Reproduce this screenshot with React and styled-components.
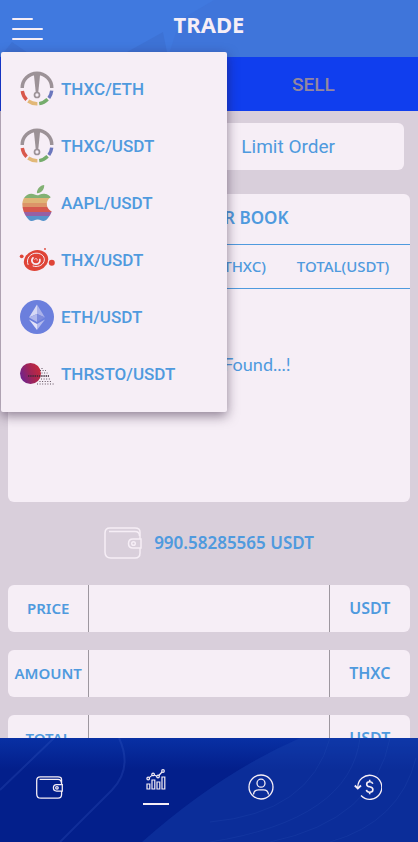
import React, { useState } from "react";
import styled, { createGlobalStyle } from "styled-components";

const pairs = [
	{ name: "THXC/ETH", icon: "gauge" },
	{ name: "THXC/USDT", icon: "gauge" },
	{ name: "AAPL/USDT", icon: "apple" },
	{ name: "THX/USDT", icon: "swirl" },
	{ name: "ETH/USDT", icon: "eth" },
	{ name: "THRSTO/USDT", icon: "thrsto" },
];

const fields = [
	{ id: "price", label: "PRICE", unit: "USDT" },
	{ id: "amount", label: "AMOUNT", unit: "THXC" },
	{ id: "total", label: "TOTAL", unit: "USDT" },
];

const GaugeIcon = () => (
	<svg width='36' height='36' viewBox='0 0 36 36' fill='none' strokeWidth='3.4'>
		<path d='M3.2 17A14.8 14.8 0 0 1 32.8 17' stroke='#9c9297' />
		<path d='M3.3 20A14.8 14.8 0 0 0 7.600 28.700' stroke='#d9584c' />
		<path d='M9.200 30A14.8 14.8 0 0 0 18.400 32.8' stroke='#e2b878' />
		<path d='M20.200 32.6A14.8 14.8 0 0 0 28.600 28.300' stroke='#75ac6c' />
		<path d='M29.800 27A14.8 14.8 0 0 0 32.7 19.600' stroke='#6b77bd' />
		<path d='M14.8 2.500H21.2L19.200 22H16.800Z' fill='#9c9297' />
		<circle cx='18' cy='24' r='2.500' stroke='#9c9297' strokeWidth='1.700' fill='#f6eef6' />
	</svg>
);

const AppleIcon = () => (
	<svg width='36' height='36' viewBox='0 0 24 24'>
		<defs>
			<linearGradient id='bands' gradientUnits='userSpaceOnUse' x1='0' y1='0' x2='0' y2='24'>
				<stop offset='.37' stopColor='#82b173' />
				<stop offset='.37' stopColor='#dfb476' />
				<stop offset='.5' stopColor='#dfb476' />
				<stop offset='.5' stopColor='#dc9468' />
				<stop offset='.62' stopColor='#dc9468' />
				<stop offset='.62' stopColor='#d5584e' />
				<stop offset='.75' stopColor='#d5584e' />
				<stop offset='.75' stopColor='#9660a4' />
				<stop offset='.87' stopColor='#9660a4' />
				<stop offset='.87' stopColor='#5794cb' />
			</linearGradient>
		</defs>
		<path
			fill='url(#bands)'
			d='M12.152 6.896c-.948 0-2.415-1.078-3.96-1.04-2.04.027-3.91 1.183-4.961 3.014-2.117 3.675-.546 9.103 1.519 12.09 1.013 1.454 2.208 3.09 3.792 3.039 1.52-.065 2.09-.987 3.935-.987 1.831 0 2.35.987 3.96.948 1.637-.026 2.676-1.48 3.676-2.948 1.156-1.688 1.636-3.325 1.662-3.415-.039-.013-3.182-1.221-3.22-4.857-.026-3.04 2.48-4.494 2.597-4.559-1.429-2.09-3.623-2.324-4.39-2.376-2-.156-3.675 1.09-4.61 1.09zM15.53 3.83c.843-1.012 1.4-2.427 1.245-3.83-1.207.052-2.662.805-3.532 1.818-.78.896-1.454 2.338-1.273 3.714 1.338.104 2.715-.688 3.559-1.701'
		/>
	</svg>
);

const SwirlIcon = () => (
	<svg width='36' height='36' viewBox='0 0 36 36' fill='#df4437'>
		<ellipse cx='17' cy='18.5' rx='12.4' ry='10.200' transform='rotate(-20 17 18.5)' />
		<g fill='none' stroke='#f6eef6' strokeLinecap='round'>
			<path d='M9 22.500C6.500 16 12 10.800 18 11.200C23 11.500 26.500 15 25 19.500C23.500 23.800 18 25.500 14 24' strokeWidth='1' />
			<path d='M14 15.800C11.500 18.500 13.500 22.300 17.200 22.200C20 22 21.500 19.500 20.800 17.500' strokeWidth='1.700' />
			<path d='M15.800 17.200C17 15.800 18.500 16.500 18.200 18.200' strokeWidth='.9' />
		</g>
		<circle cx='2.700' cy='14.300' r='1.900' />
		<circle cx='32.800' cy='20.800' r='3' />
		<circle cx='26' cy='7' r='.9' />
	</svg>
);

const EthIcon = () => (
	<svg width='36' height='36' viewBox='0 0 36 36'>
		<circle cx='18' cy='18' r='17' fill='#6b7fdd' />
		<path d='M18 5.500L10 18.500L18 15Z' fill='#d7d9f4' />
		<path d='M18 5.500L26 18.500L18 15Z' fill='#aab2ea' />
		<path d='M10 18.500L18 15V23Z' fill='#b0b7ec' />
		<path d='M26 18.500L18 15V23Z' fill='#7e8cdd' />
		<path d='M10 20.500L18 25V31Z' fill='#e4e4f8' />
		<path d='M26 20.500L18 25V31Z' fill='#b4bbee' />
	</svg>
);

const ThrstoIcon = () => (
	<svg width='36' height='36' viewBox='0 0 36 36'>
		<defs>
			<linearGradient id='ball' x1='0' y1='.7' x2='1' y2='.3'>
				<stop offset='0' stopColor='#6a2392' />
				<stop offset='.5' stopColor='#a02458' />
				<stop offset='1' stopColor='#c62a3a' />
			</linearGradient>
		</defs>
		<circle cx='11.500' cy='17.500' r='10.500' fill='url(#ball)' />
		<g stroke='#3a2837' strokeWidth='1' strokeDasharray='1 1.600'>
			<path d='M22.500 12.500H25M21 14.500H27M22.500 17H28.500M22 23H31M20.500 25.500H32.500M18 28H36' strokeOpacity='.8' />
			<path d='M9 20H30' strokeWidth='1.300' strokeDasharray='1.400 .8' />
		</g>
	</svg>
);

const icons = {
	gauge: GaugeIcon,
	apple: AppleIcon,
	swirl: SwirlIcon,
	eth: EthIcon,
	thrsto: ThrstoIcon,
};

const WalletIcon = ({ width, height, stroke = 1.5 }) => (
	<svg width={width} height={height} viewBox='0 0 38 32' fill='none' stroke='currentColor' strokeWidth={stroke}>
		<path d='M36 12V5Q36 1 31 1H6Q1 1 1 6V25Q1 31 7 31H31Q36 31 36 26V21' />
		<path d='M5 4.500H31Q35.500 4.500 35.500 9' />
		<path d='M37 12H29Q24.500 12 24.500 16.500Q24.500 21 29 21H37Z' />
		<circle cx='29.500' cy='16.500' r='1.800' />
	</svg>
);

const ChartIcon = () => (
	<svg width='20' height='21' viewBox='0 0 20 21' fill='none' stroke='currentColor' strokeWidth='1.200'>
		<path d='M1 15H3.800V20H1ZM6 11H8.800V20H6ZM11 13H13.800V20H11ZM16 8H18.800V20H16Z' />
		<path d='M3.200 8.600L6 6.400M8.300 6L10.800 7.200M12.800 6.500L16 3' />
		<circle cx='2.200' cy='9.500' r='1.300' />
		<circle cx='7.100' cy='5.400' r='1.300' />
		<circle cx='12' cy='7.500' r='1.300' />
		<circle cx='17' cy='2' r='1.300' />
	</svg>
);

const UserIcon = () => (
	<svg width='26' height='26' viewBox='0 0 26 26' fill='none' stroke='currentColor' strokeWidth='1.300'>
		<circle cx='13' cy='13' r='12' />
		<circle cx='13' cy='9.200' r='4' />
		<path d='M5.500 20.500Q6 15.800 10.500 15.800H15.500Q20 15.800 20.500 20.500' />
	</svg>
);

const HistoryIcon = () => (
	<svg width='28' height='26' viewBox='0 0 28 26' fill='none' stroke='currentColor' strokeWidth='1.300'>
		<path d='M3.800 14A12 12 0 1 1 7 21.500' />
		<path d='M.8 11.500L3.800 14.500L7 11.500' strokeWidth='1.800' />
		<path d='M18.800 9.800Q18.200 7.800 15.700 7.800Q12.700 7.800 12.700 10.200Q12.700 12.300 15.700 12.800Q18.900 13.400 18.900 15.700Q18.900 18.200 15.700 18.200Q12.800 18.200 12.400 15.900M15.700 5.700V7.800M15.700 18.200V20.300' strokeWidth='1.600' />
	</svg>
);

const App = () => {
	const [pair, setPair] = useState("THXC/ETH");
	const [open, setOpen] = useState(true);
	const [values, setValues] = useState({ price: "", amount: "", total: "" });

	return (
		<Container>
			<GlobalStyle />
			<Header>
				<HeaderArt viewBox='0 0 418 57' preserveAspectRatio='none'>
					<path d='M0 57L12 42L34 57ZM118 57L163 32L168 57Z' fill='#3d72d5' />
					<path d='M168 57L180 20L214 0H418V57Z' fill='#3f75da' />
				</HeaderArt>
				<MenuButton aria-label='Menu'>
					<Bar short />
					<Bar />
					<Bar />
				</MenuButton>
				<Heading>TRADE</Heading>
			</Header>
			<Tabs>
				<Tab active>BUY</Tab>
				<Tab>SELL</Tab>
			</Tabs>

			<Content>
				<Filters>
					<PairButton onClick={() => setOpen(!open)}>{pair}</PairButton>
					<OrderType aria-label='Order type'>
						<option>Limit Order</option>
						<option>Market Order</option>
					</OrderType>
				</Filters>

				<Book>
					<BookTitle>THXC ORDER BOOK</BookTitle>
					<BookTable>
						<thead>
							<tr>
								<th>PRICE(USDT)</th>
								<th>AMOUNT(THXC)</th>
								<th>TOTAL(USDT)</th>
							</tr>
						</thead>
						<tbody>
							<tr>
								<td colSpan='3'>No Records Found...!</td>
							</tr>
						</tbody>
					</BookTable>
				</Book>

				<Balance>
					<WalletIcon width='38' height='32' />
					<span>990.58285565 USDT</span>
				</Balance>

				{fields.map((props) => (
					<Field key={props.id}>
						<Label htmlFor={props.id}>{props.label}</Label>
						<Input
							id={props.id}
							value={values[props.id]}
							onChange={(e) => setValues({ ...values, [props.id]: e.target.value })}
						/>
						<Unit>{props.unit}</Unit>
					</Field>
				))}
			</Content>

			<Nav>
				<NavArt viewBox='0 0 418 104' preserveAspectRatio='none'>
					<path d='M142 104Q220 35 300 0H418V104Z' fill='#1843b0' fillOpacity='.4' />
					<g fill='none' stroke='#4c70d0' strokeOpacity='.2'>
						<path d='M0 52L54 0M60 104L112 52Q133 30 119 0' strokeWidth='2' />
						<path d='M210 84Q310 75 330 0M210 104Q350 82 360 0M270 104Q375 82 390 0M330 104Q400 84 416 20' strokeOpacity='.12' />
					</g>
				</NavArt>
				<NavLink href='#wallet' aria-label='Wallet'>
					<WalletIcon width='27' height='23' stroke={1.8} />
				</NavLink>
				<NavLink href='#trade' aria-label='Trade' active>
					<ChartIcon />
				</NavLink>
				<NavLink href='#profile' aria-label='Profile'>
					<UserIcon />
				</NavLink>
				<NavLink href='#history' aria-label='History'>
					<HistoryIcon />
				</NavLink>
			</Nav>

			{open ? (
				<Dropdown>
					{pairs.map((props) => {
						const Icon = icons[props.icon];
						return (
							<Option
								key={props.name}
								onClick={() => {
									setPair(props.name);
									setOpen(false);
								}}>
								<Icon />
								{props.name}
							</Option>
						);
					})}
				</Dropdown>
			) : null}
		</Container>
	);
};

export default App;

const flag = (...names) => ({
	shouldForwardProp: (prop) => !names.includes(prop),
});

const GlobalStyle = createGlobalStyle`
	* {
		box-sizing: border-box;
	}

	body {
		margin: 0;
		font-family: "Noto Sans", sans-serif;
		color: #4f9ade;
	}

	button, input, select {
		font: inherit;
		color: inherit;
		border: 0;
		outline: none;
		border-radius: 0;
	}

	button, select {
		cursor: pointer;
	}
`;

const Container = styled.div`
	position: relative;
	height: 100vh;
	display: flex;
	flex-direction: column;
	background-color: #d9cfdb;
`;

const Header = styled.header`
	position: relative;
	flex: none;
	height: 57px;
	padding: 0 12px;
	display: grid;
	grid-template-columns: 32px 1fr 32px;
	align-items: center;
	background-color: #4079df;
`;
const HeaderArt = styled.svg`
	position: absolute;
	inset: 0;
	width: 100%;
	height: 100%;
`;
const MenuButton = styled.button`
	position: relative;
	padding: 0;
	background: none;
	display: flex;
	flex-direction: column;
	gap: 8px;
`;
const Bar = styled.span.withConfig(flag("short"))`
	width: ${({ short }) => (short ? "21px" : "31px")};
	height: 2px;
	border-radius: 1px;
	background-color: #f6eef6;
`;
const Heading = styled.h1`
	position: relative;
	margin: 0;
	padding-bottom: 10px;
	text-align: center;
	font-size: 22px;
	line-height: 30px;
	font-weight: 700;
	color: #f6eef6;
`;

const Tabs = styled.div`
	flex: none;
	display: grid;
	grid-template-columns: 1fr 1fr;
	height: 54px;
`;
const Tab = styled.button.withConfig(flag("active"))`
	background-color: #103eee;
	color: ${({ active }) => (active ? "#f6eef6" : "#93879f")};
	font-family: Roboto, sans-serif;
	font-size: 19px;
	font-weight: 500;
`;

const Content = styled.main`
	flex: 1;
	min-height: 0;
	padding: 12px 8px 0;
	overflow-y: auto;
	scrollbar-width: none;
`;
const Filters = styled.div`
	display: grid;
	grid-template-columns: 2fr 3fr;
	gap: 4px;
	padding: 0 6px;
	margin-bottom: 24px;
	font-family: Roboto, sans-serif;
	font-size: 19px;
`;
const PairButton = styled.button`
	height: 47px;
	padding: 0;
	border-radius: 6px;
	background-color: #f6eef6;
`;
const OrderType = styled.select`
	appearance: none;
	height: 47px;
	border-radius: 6px;
	background-color: #f6eef6;
	text-align: center;
	text-align-last: center;
`;

const Book = styled.section`
	height: 308px;
	border-radius: 6px;
	background-color: #f6eef6;
	overflow: hidden;
`;
const BookTitle = styled.h2`
	margin: 0;
	height: 50px;
	text-align: center;
	font-size: 17px;
	line-height: 48px;
	font-weight: 600;
`;
const BookTable = styled.table`
	width: 100%;
	table-layout: fixed;
	border-collapse: collapse;

	th {
		height: 44px;
		padding: 0 0 2px;
		border-top: 1px solid #4f9ade;
		border-bottom: 1px solid #4f9ade;
		font-size: 15px;
		line-height: 20px;
		font-weight: 500;
	}

	td {
		height: 152px;
		padding: 0 0 2px;
		text-align: center;
		font-family: Lato, sans-serif;
		font-size: 18px;
	}
`;

const Balance = styled.div`
	display: flex;
	justify-content: center;
	align-items: center;
	gap: 12px;
	height: 83px;
	padding-bottom: 2px;
	font-size: 17px;
	font-weight: 600;

	svg {
		color: #f6eef6;
	}
`;

const Field = styled.div`
	display: grid;
	grid-template-columns: 1fr 3fr 1fr;
	height: 47px;
	margin-bottom: 18px;
	border-radius: 6px;
	background-color: #f6eef6;
	line-height: 46px;
	font-weight: 600;
	text-align: center;
`;
const Label = styled.label`
	font-size: 15px;
`;
const Unit = styled.span`
	font-size: 16px;
`;
const Input = styled.input`
	width: 100%;
	height: 47px;
	padding: 0 10px;
	background: none;
	border-left: 1px solid #9d979f;
	border-right: 1px solid #9d979f;
`;

const Nav = styled.nav`
	position: relative;
	flex: none;
	height: 104px;
	display: flex;
	justify-content: space-between;
	padding: 0 36px 6px;
	background: linear-gradient(#0830a4, #031f8b 30%, #031f8b);
`;
const NavArt = styled.svg`
	position: absolute;
	inset: 0;
	width: 100%;
	height: 100%;
`;
const NavLink = styled.a.withConfig(flag("active"))`
	position: relative;
	display: flex;
	flex-direction: column;
	justify-content: center;
	align-items: center;
	gap: 13px;
	color: #f6eef6;

	&::after {
		content: "";
		display: ${({ active }) => (active ? "block" : "none")};
		width: 26px;
		height: 2px;
		background-color: #f6eef6;
	}
`;

const Dropdown = styled.div`
	position: absolute;
	top: 52px;
	left: 1px;
	width: 54%;
	padding: 8px 0 10px;
	display: flex;
	flex-direction: column;
	border-radius: 2px;
	background-color: #f6eef6;
	box-shadow: 0 4px 12px rgba(40, 20, 50, 0.5);
`;
const Option = styled.button`
	display: flex;
	align-items: center;
	gap: 6px;
	height: 57px;
	padding: 0 18px;
	background: none;
	font-family: Roboto, sans-serif;
	font-size: 17px;
	font-weight: 500;
`;
